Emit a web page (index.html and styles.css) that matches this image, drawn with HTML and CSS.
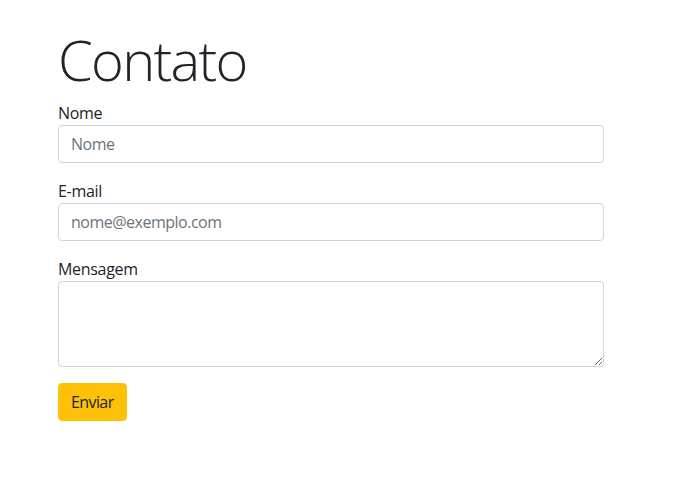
FILE: index.html
```html
<!DOCTYPE html>
<html lang="pt">
<head>
<meta charset="utf-8">
<title>Contato</title>
<link rel="stylesheet" href="styles.css">
</head>
<body>
<main class="container">
  <h1 class="display">Contato</h1>
  <form class="form">
    <div class="group">
      <label class="label" for="nome">Nome</label>
      <input class="control" id="nome" type="text" placeholder="Nome">
    </div>
    <div class="group">
      <label class="label" for="email">E-mail</label>
      <input class="control" id="email" type="email" placeholder="nome@exemplo.com">
    </div>
    <div class="group">
      <label class="label" for="msg">Mensagem</label>
      <textarea class="control area" id="msg" rows="3"></textarea>
    </div>
    <button class="btn" type="button">Enviar</button>
  </form>
</main>
</body>
</html>
```
FILE: styles.css
```css
* { box-sizing: border-box; }
html, body { margin: 0; }
body {
  font-family: "Open Sans", "Noto Sans", sans-serif;
  font-size: 16px;
  line-height: 1.5;
  color: #212529;
  background: #fff;
}
.container {
  width: 546px;
  margin-left: 58px;
  padding-top: 26px;
}
.display {
  margin: 0 0 8px;
  font-size: 56px;
  font-weight: 300;
  line-height: 1.2;
  letter-spacing: -1.7px;
}
.form { display: flex; flex-direction: column; align-items: flex-start; }
.group { width: 100%; margin-bottom: 16px; display: flex; flex-direction: column; }
.label { display: block; font-size: 16px; line-height: 24px; letter-spacing: -0.3px; }
.control {
  display: block;
  width: 100%;
  height: 38px;
  padding: 6px 12px;
  font-family: inherit;
  font-size: 16px;
  line-height: 24px;
  letter-spacing: -0.5px;
  color: #495057;
  background: #fff;
  border: 1px solid #ced4da;
  border-radius: 4px;
  margin: 0;
}
.control::placeholder { color: #6c757d; opacity: 1; }
.area { height: 86px; resize: vertical; }
.btn {
  font-family: inherit;
  font-size: 16px;
  line-height: 24px;
  letter-spacing: -0.6px;
  padding: 6px 12px;
  height: 38px;
  color: #212529;
  background: #ffc107;
  border: 1px solid #ffc107;
  border-radius: 4px;
}
```
